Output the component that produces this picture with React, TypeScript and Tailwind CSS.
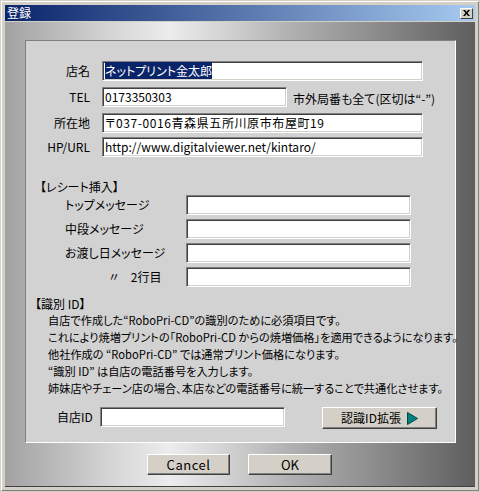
import React from 'react';

const FONT = "font-['Noto_Sans_CJK_JP',sans-serif] [font-feature-settings:'palt']";

const Field: React.FC<{ width: string; children?: React.ReactNode }> = ({ width, children }) => (
  <div
    className={`${width} h-[20px] bg-white border border-t-[#808080] border-l-[#808080] border-r-white border-b-white shadow-[inset_1px_1px_0_#404040,inset_-1px_-1px_0_#d4d0c8] pl-[2px] text-[12px] leading-[18px] text-black whitespace-nowrap overflow-hidden`}
  >
    {children}
  </div>
);

const RaisedButton: React.FC<{ className?: string; children: React.ReactNode }> = ({ className = '', children }) => (
  <div
    className={`${className} bg-[#d4d0c8] border border-t-white border-l-white border-r-[#404040] border-b-[#404040] shadow-[inset_-1px_-1px_0_#808080] flex items-center justify-center text-black`}
  >
    {children}
  </div>
);

const recipients = ['トップメッセージ', '中段メッセージ', 'お渡し日メッセージ'];

const idNotes = [
  '自店で作成した“RoboPri-CD”の識別のために必須項目です。',
  'これにより焼増プリントの「RoboPri-CD からの焼増価格」を適用できるようになります。',
  '他社作成の “RoboPri-CD” では通常プリント価格になります。',
  '“識別 ID” は自店の電話番号を入力します。',
  '姉妹店やチェーン店の場合、本店などの電話番号に統一することで共通化させます。',
];

export default function App() {
  return (
    <div className={`w-[480px] h-[492px] bg-[#d4d0c8] p-[1px] ${FONT}`}>
      <div className="h-full border border-t-white border-l-white border-r-[#808080] border-b-[#808080] p-[3px] flex flex-col">
        {/* Title bar */}
        <div className="h-[16px] flex items-center justify-between bg-[linear-gradient(to_right,#0a246a,#a6caf0)] pl-[2px] pr-[2px]">
          <span className="text-white text-[12px] leading-[16px]">登録</span>
          <div className="w-[13px] h-[11px] bg-[#d4d0c8] border border-t-white border-l-white border-r-[#404040] border-b-[#404040] flex items-center justify-center">
            <svg width="7" height="6" viewBox="0 0 7 6">
              <path d="M0 0h2l1.5 2L5 0h2L4.5 3 7 6H5L3.5 4 2 6H0l2.5-3z" fill="#000" />
            </svg>
          </div>
        </div>

        {/* Body */}
        <div className="flex-1 mt-[1px] flex flex-col border-b border-[#404040] bg-[linear-gradient(to_right,#a2a2a2_0%,#b6b6b6_9%,#d8d8d8_24%,#ececec_35%,#d2d2d2_47%,#b2b2b2_60%,#8e8e8e_78%,#707070_92%,#5e5e5e_100%)]">
          <div className="mt-[18px] ml-[20px] w-[431px] h-[403px] bg-[#d2d2d2] border border-t-[#808080] border-l-[#808080] border-r-white border-b-white flex flex-col text-[12px] text-black">
            {/* Shop info */}
            <div className="mt-[20px] flex flex-col gap-[4px]">
              <div className="flex items-center">
                <span className="w-[64px] text-right leading-[20px]">店名</span>
                <div className="ml-[12px]">
                  <Field width="w-[321px]">
                    <span className="bg-[#0a246a] text-white">ネットプリント金太郎</span>
                  </Field>
                </div>
              </div>
              <div className="flex items-center">
                <span className="w-[64px] text-right leading-[20px]">TEL</span>
                <div className="ml-[12px]">
                  <Field width="w-[185px]">0173350303</Field>
                </div>
                <span className="ml-[6px] mt-[4px] leading-[20px]">市外局番も全て(区切は“-”)</span>
              </div>
              <div className="flex items-center">
                <span className="w-[64px] text-right leading-[20px]">所在地</span>
                <div className="ml-[12px]">
                  <Field width="w-[321px]">
                    <span className="tracking-[0.6px]">〒037-0016青森県五所川原市布屋町19</span>
                  </Field>
                </div>
              </div>
              <div className="flex items-center">
                <span className="w-[64px] text-right leading-[20px]">HP/URL</span>
                <div className="ml-[12px]">
                  <Field width="w-[321px]">http://www.digitalviewer.net/kintaro/</Field>
                </div>
              </div>
            </div>

            {/* Receipt */}
            <div className="mt-[22px] ml-[14px] h-[16px] leading-[16px]">【レシート挿入】</div>
            <div className="flex flex-col gap-[4px]">
              {recipients.map((label) => (
                <div key={label} className="flex items-center">
                  <span className="ml-[39px] w-[121px] leading-[20px]">{label}</span>
                  <Field width="w-[225px]" />
                </div>
              ))}
              <div className="flex items-center">
                <span className="ml-[82px] w-[78px] leading-[20px]">〃&nbsp;&nbsp;&nbsp;&nbsp;2行目</span>
                <Field width="w-[225px]" />
              </div>
            </div>

            {/* ID */}
            <div className="mt-[9px] ml-[9px] h-[16px] leading-[16px]">【識別 ID】</div>
            <div className="ml-[22px] flex flex-col text-[11.2px]">
              {idNotes.map((line) => (
                <div key={line} className="leading-[17px] whitespace-nowrap">
                  {line}
                </div>
              ))}
            </div>

            <div className="mt-[10px] flex items-start">
              <span className="ml-[31px] w-[43px] leading-[20px]">自店ID</span>
              <Field width="w-[185px]" />
              <RaisedButton className="ml-[37px] w-[115px] h-[22px] gap-[6px]">
                <span className="text-[12px] leading-[20px]">認識ID拡張</span>
                <svg width="11" height="13" viewBox="0 0 11 13">
                  <path d="M0.5 0.5 L10.5 6.5 L0.5 12.5 Z" fill="#008080" stroke="#004848" strokeWidth="1" />
                </svg>
              </RaisedButton>
            </div>
          </div>

          {/* Dialog buttons */}
          <div className="mt-[11px] ml-[142px] flex gap-[18px]">
            <RaisedButton className="w-[83px] h-[21px]">
              <span className="text-[13px] leading-[19px] tracking-[0.5px]">Cancel</span>
            </RaisedButton>
            <RaisedButton className="w-[84px] h-[21px]">
              <span className="text-[13px] leading-[19px]">OK</span>
            </RaisedButton>
          </div>
        </div>
      </div>
    </div>
  );
}
